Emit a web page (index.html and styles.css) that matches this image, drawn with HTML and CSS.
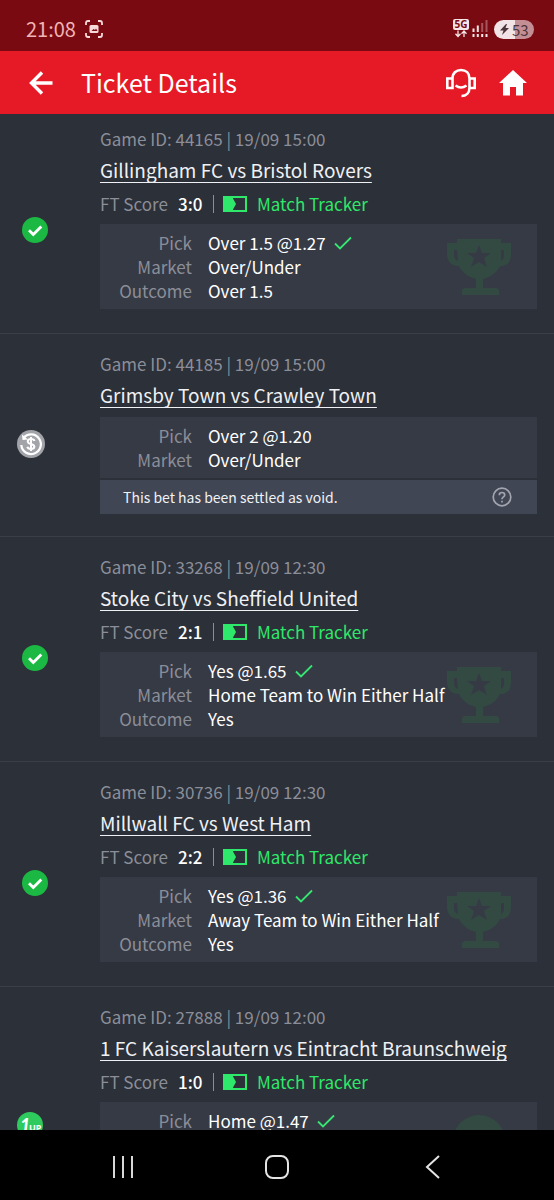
FILE: index.html
```html
<!DOCTYPE html>
<html lang="en">
<head>
<meta charset="utf-8">
<meta name="viewport" content="width=device-width, initial-scale=1">
<title>Ticket Details</title>
<link rel="stylesheet" href="styles.css">
</head>
<body>
<svg class="sprite" aria-hidden="true">
  <symbol id="won" viewBox="0 0 26 26"><circle cx="13" cy="13" r="13" fill="#1bb843"/><path d="M7 13.2l4.3 4.3 8-8" fill="none" stroke="#fff" stroke-width="2.8"/></symbol>
  <symbol id="check" viewBox="0 0 18 14"><path d="M1 7.5L6 12.500L17 1.500" fill="none" stroke="#35e772" stroke-width="1.800"/></symbol>
  <symbol id="tracker" viewBox="0 0 24 16"><path d="M1 1h22v14H1z" fill="none" stroke="#2ee86b" stroke-width="2"/><path d="M0 0h10v2.500l3 5.500-3 5.500V16H0z" fill="#2ee86b"/></symbol>
  <symbol id="trophy" viewBox="0 0 64 56"><path fill="#334a43" fill-rule="evenodd" d="M10 0h44v4h10v11c0 8-4 12-11 12-3 6-8 10-14 12l-3 1v9h12q4 0 4 3v4H15v-4q0-3 4-3h10v-9l-3-1c-6-2-11-6-14-12C5 27 0 23 0 15V4h10zM10 11H7v5c0 3 1 5 4 6zM54 11v11c2-1 3-3 3-6v-5zM32 6l-3 8h-9l7 5-3 9 8-5 8 5-3-9 7-5h-9z"/></symbol>
</svg>

<div class="status">
  <time class="clock">21:08</time>
  <svg class="shot" viewBox="0 0 18 18" fill="none" stroke="#f5dada" stroke-width="1.800" aria-hidden="true"><path d="M1 5V3q0-2 2-2h2M13 1h2q2 0 2 2v2M17 13v2q0 2-2 2h-2M5 17H3q-2 0-2-2v-2"/><rect x="4.500" y="5" width="9" height="8" rx="1.500" fill="#f5dada" stroke="none"/><path d="M6.500 11l2-2 1.500 1 1-1.500 1.500 2.500z" fill="#7b0a12" stroke="none"/></svg>
  <div class="signals">
    <svg width="36" height="20" viewBox="0 0 36 20" role="img" aria-label="5G signal"><rect x="0" y="0" width="16" height="11" rx="2" fill="#f5e6e8"/><text x="8" y="9" text-anchor="middle" class="five-g">5G</text><path d="M5 11.500v6M2.500 14.800L5 17.500l2.500-2.700M11 18v-6M8.500 14.700L11 12l2.500 2.700" fill="none" stroke="#f5e6e8" stroke-width="1.300"/><path d="M20.500 13V9.500M24.800 13V6.500" stroke="#f5e6e8" stroke-width="2"/><path d="M29.200 13V4M33.500 13V1" stroke="#a8545c" stroke-width="2"/><path d="M19.500 16.500h2m2.300 0h2m2.400 0h2m2.300 0h2" stroke="#f5e6e8" stroke-width="2.800"/></svg>
    <span class="battery"><svg width="9" height="11" viewBox="0 0 9 11" aria-hidden="true"><path d="M6 0L0 6.500h3.500L2 11l7-7H5.500L7 0z" fill="#4b353b"/></svg>53</span>
  </div>
</div>

<header class="bar">
  <button class="icon-btn" aria-label="Back"><svg width="24" height="24" viewBox="0 0 24 24" fill="none" stroke="#fff" stroke-width="3.400"><path d="M23.500 12H3M13 1.500L2.500 12 13 22.500"/></svg></button>
  <h1>Ticket Details</h1>
  <button class="icon-btn" aria-label="Support"><svg width="32" height="30" viewBox="0 0 32 30" fill="none" stroke="#fff" stroke-width="2.600"><path d="M7.500 10.500C7.500 5 11 2 16 2s8.500 3 8.500 8.500v9C24.500 25 21 28 16.500 28M7.500 10.500H2.300v9.500h5.200zM24.500 10.500h5.200V20h-5.200M10.500 17.500q5.500 4 11 0"/></svg></button>
  <button class="icon-btn" aria-label="Home"><svg width="28" height="26" viewBox="0 0 28 26" fill="#fff"><path d="M14 0l14 13h-4v12.500h-7V17h-6v8.500H4V13H0z"/></svg></button>
</header>

<main class="list">
  <article class="bet bet-first">
    <div class="result"><svg class="mark" role="img" aria-label="Won"><use href="#won"/></svg></div>
    <div class="info">
      <p class="meta">Game ID: 44165 | 19/09 15:00</p>
      <h2><a href="#g44165">Gillingham FC vs Bristol Rovers</a></h2>
      <div class="score"><span>FT Score</span><b>3:0</b><i class="bar-sep"></i><a href="#t44165"><svg class="pitch"><use href="#tracker"/></svg>Match Tracker</a></div>
      <div class="panel">
        <dl><dt>Pick</dt><dd>Over 1.5 @1.27<svg class="tick"><use href="#check"/></svg></dd><dt>Market</dt><dd>Over/Under</dd><dt>Outcome</dt><dd>Over 1.5</dd></dl>
        <svg class="trophy"><use href="#trophy"/></svg>
      </div>
    </div>
  </article>

  <article class="bet bet-void">
    <div class="result"><svg class="refund" viewBox="0 0 28 28" role="img" aria-label="Void"><circle cx="14" cy="14" r="14" fill="#a2a4aa"/><path d="M6.500 8A9.800 9.800 0 1 1 4.300 15" fill="none" stroke="#fff" stroke-width="2.200"/><path d="M5 4.500l.5 5.500 5.500-.5z" fill="#fff"/><path d="M17.500 11q-.5-2-3.500-2t-3.300 2.300Q11 13.500 14 14t3.400 2.600Q17.200 19 14 19t-3.700-2.200M14 7v14" fill="none" stroke="#fff" stroke-width="2"/></svg></div>
    <div class="info">
      <p class="meta">Game ID: 44185 | 19/09 15:00</p>
      <h2><a href="#g44185">Grimsby Town vs Crawley Town</a></h2>
      <div class="panel">
        <dl><dt>Pick</dt><dd>Over 2 @1.20</dd><dt>Market</dt><dd>Over/Under</dd></dl>
      </div>
      <div class="note"><span>This bet has been settled as void.</span><button class="icon-btn" aria-label="Help"><svg width="20" height="20" viewBox="0 0 20 20" fill="none" stroke="#a2a5af" stroke-width="1.700"><circle cx="10" cy="10" r="8.800"/><path d="M7.300 8.200q0-2.700 2.700-2.700t2.700 2.400q0 1.300-1.500 2.200-1.200.8-1.200 2.200M10 13.700v1.800"/></svg></button></div>
    </div>
  </article>

  <article class="bet">
    <div class="result"><svg class="mark" role="img" aria-label="Won"><use href="#won"/></svg></div>
    <div class="info">
      <p class="meta">Game ID: 33268 | 19/09 12:30</p>
      <h2><a href="#g33268">Stoke City vs Sheffield United</a></h2>
      <div class="score"><span>FT Score</span><b>2:1</b><i class="bar-sep"></i><a href="#t33268"><svg class="pitch"><use href="#tracker"/></svg>Match Tracker</a></div>
      <div class="panel">
        <dl><dt>Pick</dt><dd>Yes @1.65<svg class="tick"><use href="#check"/></svg></dd><dt>Market</dt><dd>Home Team to Win Either Half</dd><dt>Outcome</dt><dd>Yes</dd></dl>
        <svg class="trophy"><use href="#trophy"/></svg>
      </div>
    </div>
  </article>

  <article class="bet">
    <div class="result"><svg class="mark" role="img" aria-label="Won"><use href="#won"/></svg></div>
    <div class="info">
      <p class="meta">Game ID: 30736 | 19/09 12:30</p>
      <h2><a href="#g30736">Millwall FC vs West Ham</a></h2>
      <div class="score"><span>FT Score</span><b>2:2</b><i class="bar-sep"></i><a href="#t30736"><svg class="pitch"><use href="#tracker"/></svg>Match Tracker</a></div>
      <div class="panel">
        <dl><dt>Pick</dt><dd>Yes @1.36<svg class="tick"><use href="#check"/></svg></dd><dt>Market</dt><dd>Away Team to Win Either Half</dd><dt>Outcome</dt><dd>Yes</dd></dl>
        <svg class="trophy"><use href="#trophy"/></svg>
      </div>
    </div>
  </article>

  <article class="bet bet-early">
    <div class="result"><svg class="mark" viewBox="0 0 26 26" role="img" aria-label="1UP"><circle cx="13" cy="13" r="13" fill="#2fca5e"/><text x="3" y="20" class="one">1</text><text x="12" y="19" class="up">UP</text></svg></div>
    <div class="info">
      <p class="meta">Game ID: 27888 | 19/09 12:00</p>
      <h2><a href="#g27888">1 FC Kaiserslautern vs Eintracht Braunschweig</a></h2>
      <div class="score"><span>FT Score</span><b>1:0</b><i class="bar-sep"></i><a href="#t27888"><svg class="pitch"><use href="#tracker"/></svg>Match Tracker</a></div>
      <div class="panel">
        <dl><dt>Pick</dt><dd>Home @1.47<svg class="tick"><use href="#check"/></svg></dd></dl>
        <svg class="seal" viewBox="0 0 64 72"><circle cx="32" cy="32" r="26" fill="#334a43"/></svg>
      </div>
    </div>
  </article>
</main>

<nav class="system">
  <button class="icon-btn" aria-label="Recents"><svg width="24" height="24" viewBox="0 0 24 24" stroke="#d8d8d8" stroke-width="2"><path d="M3 1v22M12 1v22M21 1v22"/></svg></button>
  <button class="icon-btn" aria-label="Home screen"><svg width="24" height="24" viewBox="0 0 24 24" fill="none" stroke="#e4e4e4" stroke-width="2"><rect x="1" y="1" width="22" height="22" rx="7"/></svg></button>
  <button class="icon-btn" aria-label="Go back"><svg width="24" height="24" viewBox="0 0 24 24" fill="none" stroke="#e4e4e4" stroke-width="2"><path d="M19 1L7 12l12 11"/></svg></button>
</nav>
</body>
</html>
```
FILE: styles.css
```css
* { box-sizing: border-box; }
body {
  margin: 0;
  height: 100vh;
  display: flex;
  flex-direction: column;
  background: #2c3038;
  color: #f0f1f4;
  font: 17px/24px "Noto Sans CJK SC", "Noto Sans", sans-serif;
}
h1, h2, p, dl, dd { margin: 0; font-weight: 400; }
svg { display: block; flex: none; }
.sprite { position: absolute; width: 0; height: 0; }
.icon-btn { padding: 0; border: 0; background: none; display: flex; cursor: pointer; }

.status {
  flex: none;
  display: flex;
  align-items: center;
  gap: 9px;
  padding: 16px 20px 9px 26px;
  background: #7a0a11;
  color: #f0b4b6;
}
.clock { font-size: 20px; line-height: 26px; }
.shot { width: 18px; height: 18px; }
.signals { display: flex; align-items: center; gap: 5px; margin-left: auto; }
.five-g { font: 700 10px "Noto Sans", sans-serif; fill: #7a0a11; }
.battery {
  display: flex;
  align-items: center;
  gap: 3px;
  width: 40px;
  height: 19px;
  padding-left: 6px;
  border-radius: 10px;
  background: linear-gradient(90deg, #f2e4e6 53%, #c48e95 53%);
  color: #4b353b;
  font-size: 15px;
  line-height: 19px;
}

.bar {
  flex: none;
  display: flex;
  align-items: center;
  gap: 22px;
  padding: 14px 27px 14px 29px;
  background: #e61927;
  color: #fff;
}
.bar h1 { flex: 1; margin-left: 6px; font-size: 25px; line-height: 35px; }

.list { flex: 1; min-height: 0; overflow-y: auto; scrollbar-width: none; }
.bet {
  display: flex;
  padding: 18px 17px 0 0;
  border-bottom: 1px solid #3a3f47;
}
.bet-first { padding-top: 13px; }
.result {
  flex: none;
  display: flex;
  align-items: center;
  width: 100px;
  padding-left: 17px;
}
.mark { width: 26px; height: 26px; margin-left: 5px; }
.refund { width: 28px; height: 28px; }
.bet-early .mark { margin-left: 0; }
.one { font: italic 900 18px "Lato", sans-serif; fill: #fff; }
.up { font: 700 9px "Noto Sans", sans-serif; fill: #fff; }

.info { flex: 1; min-width: 0; padding-bottom: 24px; }
.bet-void .info { padding-bottom: 22px; }
.bet-early .info { padding-bottom: 58px; }
.meta { color: #8b8e98; }
h2 { padding: 2px 0 6px; font-size: 19px; line-height: 33px; }
h2 a { color: inherit; text-underline-offset: 4px; text-decoration-thickness: 1px; text-decoration-skip-ink: none; }
.score { display: flex; align-items: center; padding-bottom: 8px; color: #8b8e98; }
.score span { width: 78px; }
.score b { width: 35px; font-weight: 500; color: #fff; }
.bar-sep { width: 1px; height: 18px; margin-right: 9px; background: #8b8e98; }
.score a { display: flex; align-items: center; gap: 10px; color: #2ee86b; text-decoration: none; }
.pitch { width: 24px; height: 16px; }

.panel {
  display: flex;
  align-items: center;
  padding: 7px 26px 6px 0;
  background: #363a45;
}
.panel dl { flex: 1; display: grid; grid-template-columns: 92px 1fr; column-gap: 16px; align-self: start; }
dt { text-align: right; color: #8b8e98; }
dd { display: flex; align-items: center; gap: 8px; color: #fff; white-space: nowrap; }
.tick { width: 18px; height: 14px; }
.trophy { width: 64px; height: 56px; }
.seal { width: 64px; height: 72px; }
.note {
  display: flex;
  align-items: center;
  justify-content: space-between;
  margin-top: 2px;
  padding: 5px 25px 5px 23px;
  background: #414654;
  font-size: 14px;
}

.system {
  flex: none;
  display: flex;
  justify-content: space-around;
  align-items: center;
  padding: 25px 45px 21px 46px;
  background: #000;
}
```
